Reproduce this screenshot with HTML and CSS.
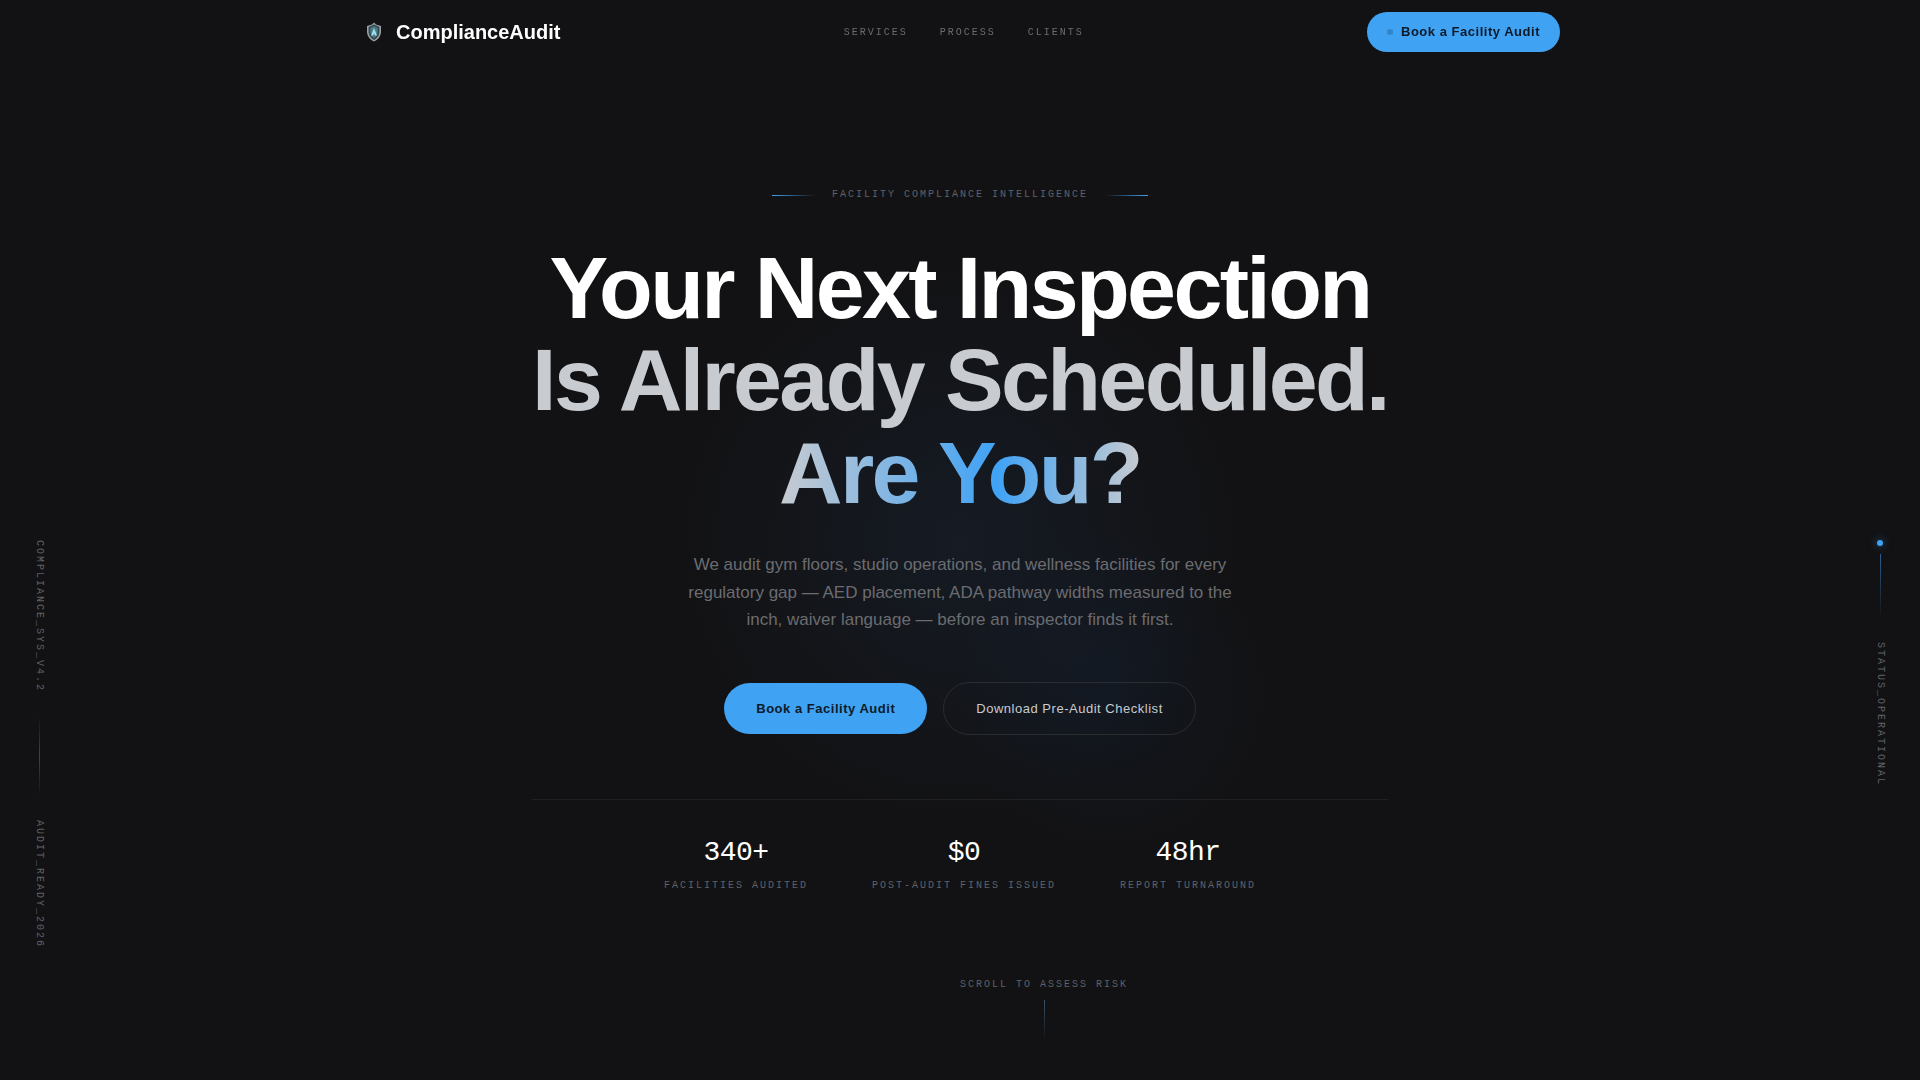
FILE: index.html
```html
<!DOCTYPE html>
<html lang="en">
<head>
  <meta charset="UTF-8">
  <meta name="viewport" content="width=device-width, initial-scale=1.0">
  <title>ComplianceAudit</title>
  <link rel="stylesheet" href="styles.css">
</head>
<body>

<!-- Nav -->
<header class="nav">
  <div class="nav-inner">
    <a href="#" class="logo">
      <svg class="logo-icon" viewBox="0 0 28 28" aria-hidden="true">
        <path d="M14 4.6 L16 6.6 L21 8 V14.5 Q20.4 20.4 14 23.6 Q7.6 20.4 7 14.5 V8 L12 6.6 Z" fill="#9aa1a4"/>
        <path d="M14 6.6 L19.4 9 V14.5 Q18.8 19.2 14 22 Q9.2 19.2 8.6 14.5 V9 Z" fill="#34464e"/>
        <path d="M14 8 L17.8 10 V14.5 Q17.2 18 14 20.2 Q10.8 18 10.2 14.5 V10 Z" fill="#4d7885"/>
        <path d="M14 10 L17 17.6 H15 L14 15.6 L13 17.6 H11 Z" fill="#9be4ee"/>
      </svg>
      <span>ComplianceAudit</span>
    </a>
    <nav class="nav-links">
      <a href="#services">Services</a>
      <a href="#process">Process</a>
      <a href="#clients">Clients</a>
    </nav>
    <button type="button" class="btn btn-nav"><span class="btn-dot"></span>Book a Facility Audit</button>
  </div>
</header>

<!-- Hero -->
<main class="hero">
  <div class="glow glow-main"></div>
  <div class="glow glow-small"></div>

  <div class="hero-content">
    <p class="eyebrow mono">Facility Compliance Intelligence</p>

    <h1 class="title">
      <span class="line-white">Your Next Inspection</span>
      <span class="line-silver">Is Already Scheduled.</span>
      <span class="line-blue">Are You?</span>
    </h1>

    <p class="subtitle">We audit gym floors, studio operations, and wellness facilities for every regulatory gap — AED placement, ADA pathway widths measured to the inch, waiver language — before an inspector finds it first.</p>

    <div class="actions">
      <button type="button" class="btn btn-primary">Book a Facility Audit</button>
      <button type="button" class="btn btn-ghost">Download Pre-Audit Checklist</button>
    </div>

    <div class="stats">
      <div class="stat">
        <div class="stat-value">340+</div>
        <div class="mono">Facilities Audited</div>
      </div>
      <div class="stat">
        <div class="stat-value">$0</div>
        <div class="mono">Post-Audit Fines Issued</div>
      </div>
      <div class="stat">
        <div class="stat-value">48hr</div>
        <div class="mono">Report Turnaround</div>
      </div>
    </div>
  </div>

  <!-- Side rails -->
  <div class="rail rail-left">
    <span class="mono">COMPLIANCE_SYS_V4.2</span>
    <span class="rail-line"></span>
    <span class="mono">AUDIT_READY_2026</span>
  </div>
  <div class="rail rail-right">
    <span class="rail-status">
      <span class="status-dot"></span>
      <span class="status-line"></span>
    </span>
    <span class="mono">STATUS_OPERATIONAL</span>
  </div>

  <div class="scroll-hint">
    <span class="mono">Scroll to Assess Risk</span>
    <span class="scroll-line"></span>
  </div>
</main>

</body>
</html>
```
FILE: styles.css
```css
* {
  margin: 0;
  padding: 0;
  box-sizing: border-box;
}
body {
  background: #121214;
  color: #fff;
  font-family: "Liberation Sans", Arial, sans-serif;
  overflow-x: hidden;
}
a {
  color: inherit;
  text-decoration: none;
}
.mono {
  font-family: "Liberation Mono", "Courier New", monospace;
  font-size: 10px;
  line-height: 12px;
  letter-spacing: 2px;
  text-transform: uppercase;
  color: #606165;
}

/* nav */
.nav {
  position: fixed;
  top: 0;
  left: 0;
  right: 0;
  z-index: 10;
}
.nav-inner {
  max-width: 1200px;
  margin: 0 auto;
  padding: 12px 0;
  display: flex;
  justify-content: space-between;
  align-items: center;
}
.logo {
  display: flex;
  align-items: center;
  gap: 8px;
  font-size: 20px;
  font-weight: bold;
}
.logo-icon {
  width: 28px;
  height: 28px;
}
.nav-links {
  display: flex;
  gap: 32px;
  font-family: "Liberation Mono", "Courier New", monospace;
  font-size: 10px;
  letter-spacing: 2px;
  text-transform: uppercase;
  color: #6b6c70;
}

/* buttons */
.btn {
  border: none;
  border-radius: 999px;
  font-family: inherit;
  font-size: 13px;
  line-height: 15px;
  letter-spacing: 0.04em;
  cursor: pointer;
}
.btn-nav,
.btn-primary {
  background: #3fa2f2;
  color: #0c1a2a;
  font-weight: bold;
}
.btn-nav {
  display: flex;
  align-items: center;
  gap: 8px;
  padding: 12px 20px 13px;
}
.btn-dot {
  width: 6px;
  height: 6px;
  border-radius: 50%;
  background: #2e86cf;
}
.btn-primary {
  padding: 18px 32px;
}
.btn-ghost {
  padding: 18px 32px;
  border: 1px solid #2a2c30;
  background: transparent;
  color: #c8cbd0;
}

/* hero */
.hero {
  position: relative;
  min-height: 100vh;
  overflow: hidden;
  display: flex;
  flex-direction: column;
  align-items: center;
  padding-top: 188px;
}
.glow {
  position: absolute;
  border-radius: 50%;
}
.glow-main {
  left: calc(50% - 300px);
  top: calc(50% - 300px);
  width: 600px;
  height: 600px;
  background: radial-gradient(circle, rgba(63, 140, 242, 0.07), transparent 66%);
}
.glow-small {
  left: calc(50% - 10px);
  top: calc(50% - 10px);
  width: 320px;
  height: 320px;
  background: radial-gradient(circle, rgba(20, 90, 180, 0.07), transparent 70%);
}
.hero-content {
  position: relative;
  display: flex;
  flex-direction: column;
  align-items: center;
  text-align: center;
}
.eyebrow {
  display: flex;
  align-items: center;
  gap: 16px;
  line-height: 14px;
}
.eyebrow::before,
.eyebrow::after {
  content: "";
  width: 44px;
  height: 1px;
  background: linear-gradient(90deg, #3fa2f2, transparent);
}
.eyebrow::after {
  background: linear-gradient(270deg, #3fa2f2, transparent);
}
.title {
  margin-top: 40px;
  font-size: 88px;
  line-height: 1.05;
  letter-spacing: -0.03em;
}
.title span {
  display: block;
}
.line-silver {
  color: #c8cbd0;
}
.title .line-blue {
  width: fit-content;
  margin: 0 auto;
  background: linear-gradient(90deg, #c8cbd0, #3fa2f5 60%, #c8cbd0);
  -webkit-background-clip: text;
  background-clip: text;
  color: transparent;
}
.subtitle {
  max-width: 560px;
  margin-top: 32px;
  font-size: 17px;
  line-height: 1.62;
  color: #6b6c70;
}
.actions {
  display: flex;
  align-items: center;
  gap: 16px;
  margin-top: 48px;
}
.stats {
  align-self: stretch;
  display: flex;
  justify-content: center;
  gap: 64px;
  margin-top: 64px;
  padding-top: 37px;
  border-top: 1px solid #1f2124;
}
.stat-value {
  margin-bottom: 11px;
  font-family: "Liberation Mono", "Courier New", monospace;
  font-size: 28px;
  line-height: 32px;
  letter-spacing: -0.02em;
}

/* side rails */
.rail {
  position: absolute;
  top: 50%;
  display: flex;
  flex-direction: column;
  align-items: center;
  gap: 24px;
}
.rail .mono {
  writing-mode: vertical-rl;
}
.rail-left {
  left: 33px;
}
.rail-right {
  right: 34px;
}
.rail-line {
  width: 1px;
  height: 80px;
  background: linear-gradient(transparent, #28486a, transparent);
}
.rail-status {
  display: flex;
  flex-direction: column;
  align-items: center;
  gap: 8px;
}
.status-dot {
  width: 6px;
  height: 6px;
  border-radius: 50%;
  background: #3fa2f2;
  box-shadow: 0 0 8px rgba(63, 162, 242, 0.6);
}
.status-line {
  width: 1px;
  height: 64px;
  background: linear-gradient(#2f5f8c, transparent);
}

.scroll-hint {
  position: absolute;
  left: 50%;
  bottom: 40px;
  display: flex;
  flex-direction: column;
  align-items: center;
  gap: 9px;
}
.scroll-line {
  width: 1px;
  height: 40px;
  background: linear-gradient(#3a536c, transparent);
}
```
